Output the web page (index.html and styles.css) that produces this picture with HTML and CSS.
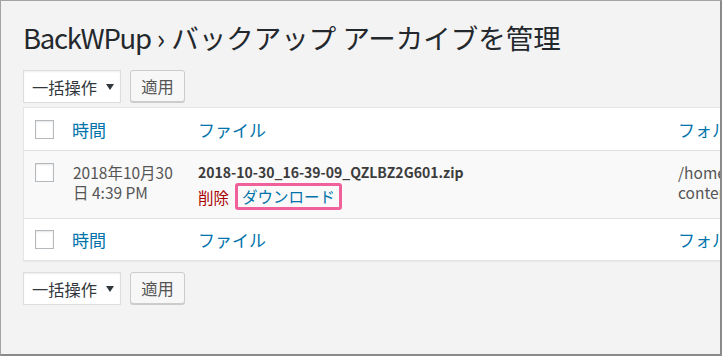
FILE: index.html
```html
<!DOCTYPE html>
<html lang="ja">
<head>
<meta charset="utf-8">
<link rel="stylesheet" href="styles.css">
</head>
<body>
<div class="frame">
  <h1 class="title"><span class="latin">BackWPup</span> › バックアップ アーカイブを管理</h1>
  <div class="tablenav">
    <div class="select">一括操作<svg class="arrow" width="8" height="6" viewBox="0 0 8 6"><path d="M0 0h8L4 6z" fill="#32373c"/></svg></div>
    <div class="button">適用</div>
  </div>
  <table class="list">
    <colgroup><col class="c-cb"><col class="c-time"><col class="c-file"><col class="c-folder"></colgroup>
    <thead>
      <tr class="head"><th class="cb"><span class="check"></span></th><th>時間</th><th>ファイル</th><th>フォルダー</th></tr>
    </thead>
    <tbody>
      <tr class="row">
        <td class="cb"><span class="check"></span></td>
        <td class="date">2018年10月30<br>日 4:39 PM</td>
        <td class="file">
          <div class="fname">2018-10-30_16-39-09_QZLBZ2G601.zip</div>
          <div class="row-actions"><span class="delete">削除</span><span class="dl">ダウンロード</span></div>
        </td>
        <td class="folder">/home/example/www/wp-<br>content/uploads/backwpup-backups/</td>
      </tr>
    </tbody>
    <tfoot>
      <tr class="foot"><th class="cb"><span class="check"></span></th><th>時間</th><th>ファイル</th><th>フォルダー</th></tr>
    </tfoot>
  </table>
  <div class="tablenav bottom">
    <div class="select">一括操作<svg class="arrow" width="8" height="6" viewBox="0 0 8 6"><path d="M0 0h8L4 6z" fill="#32373c"/></svg></div>
    <div class="button">適用</div>
  </div>
</div>
</body>
</html>
```
FILE: styles.css
```css
html, body { margin: 0; padding: 0; background: #fff; }
body { font-family: "Noto Sans CJK JP", "Noto Sans", sans-serif; }

.frame {
  width: 722px;
  height: 356px;
  box-sizing: border-box;
  border: 1px solid #a3a3a3;
  border-right: 2px solid #8a8a8a;
  border-bottom: 2px solid #8a8a8a;
  background: #f3f3f3;
  overflow: hidden;
  padding-left: 22px;
}

.title {
  margin: 0;
  padding-top: 16px;
  margin-bottom: 13px;
  height: 40px;
  line-height: 40px;
  font-size: 27.5px;
  font-weight: 400;
  color: #23282d;
  white-space: nowrap;
}
.title .latin { letter-spacing: -1.3px; }

.tablenav { display: flex; gap: 9px; height: 33px; }
.tablenav.bottom { margin-top: 11px; }

.select {
  width: 98px;
  height: 33px;
  box-sizing: border-box;
  background: #fff;
  border: 1px solid #ddd;
  box-shadow: inset 0 1px 2px rgba(0,0,0,.07);
  display: flex;
  align-items: center;
  padding-left: 8px;
  font-size: 16.25px;
  color: #32373c;
}
.select .arrow { margin-left: 9px; }

.button {
  width: 55px;
  height: 32px;
  box-sizing: border-box;
  background: #f7f7f7;
  border: 1px solid #ccc;
  border-radius: 3px;
  box-shadow: 0 1px 0 #ccc;
  display: flex;
  align-items: center;
  justify-content: center;
  font-size: 16.25px;
  color: #555;
}

.list {
  margin-top: 4px;
  width: 900px;
  table-layout: fixed;
  border-collapse: separate;
  border-spacing: 0;
  background: #fff;
  border: 1px solid #e5e5e5;
  box-shadow: 0 1px 1px rgba(0,0,0,.04);
}
.c-cb { width: 36px; }
.c-time { width: 126px; }
.c-file { width: 480px; }
.c-folder { width: 256px; }

.list th, .list td { padding: 0 12px; text-align: left; white-space: nowrap; overflow: hidden; }
.list th { font-size: 17px; font-weight: 400; color: #0073aa; vertical-align: middle; }
.list th.cb, .list td.cb { padding: 0 0 0 11px; }
.row td.date { padding-left: 13px; }

.head { height: 43px; }
.head th { border-bottom: 1px solid #e1e1e1; }
.foot { height: 42px; }
.foot th { border-top: 1px solid #e1e1e1; }

.check {
  display: block;
  width: 19px;
  height: 19px;
  box-sizing: border-box;
  border: 1px solid #b4b9be;
  background: #fff;
  box-shadow: inset 0 1px 2px rgba(0,0,0,.1);
}

.row { height: 67px; background: #f9f9f9; }
.row td {
  vertical-align: top;
  padding-top: 11px;
  font-size: 15.5px;
  line-height: 20px;
  color: #555;
}
.row td.cb { padding-top: 12px; }
.fname { font-size: 14px; font-weight: 700; color: #3c3c3c; }
.row-actions { display: flex; align-items: center; gap: 6px; margin-top: 1px; }
.delete { color: #a00; }
.dl {
  color: #0073aa;
  border: 3px solid #f0609a;
  border-radius: 3px;
  padding: 1px 4px;
  line-height: 19px;
}
```
